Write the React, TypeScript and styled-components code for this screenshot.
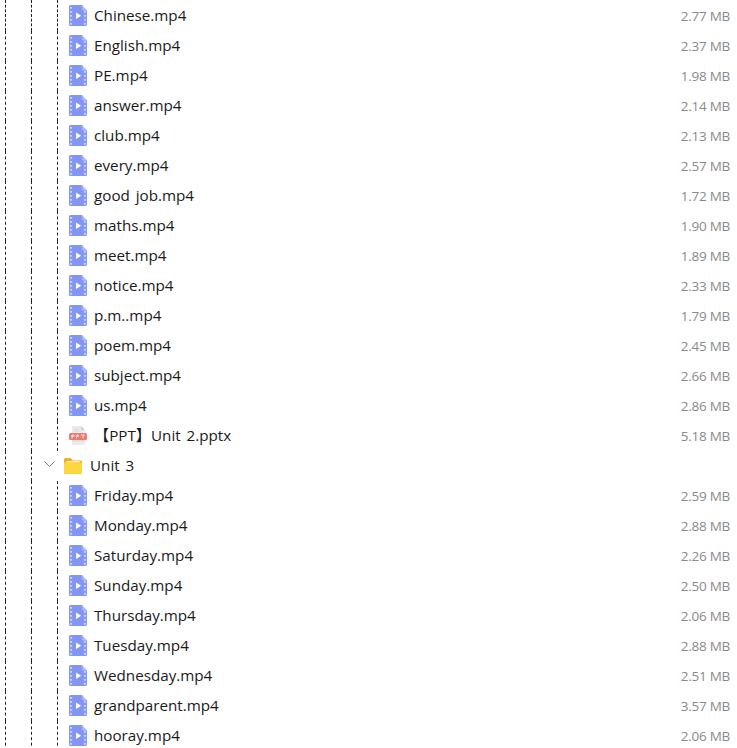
import React from 'react';
import styled, { createGlobalStyle } from 'styled-components';

type Item = { name: string; size?: string; kind: 'video' | 'ppt' | 'folder' };

const items: Item[] = [
  { name: 'Chinese.mp4', size: '2.77 MB', kind: 'video' },
  { name: 'English.mp4', size: '2.37 MB', kind: 'video' },
  { name: 'PE.mp4', size: '1.98 MB', kind: 'video' },
  { name: 'answer.mp4', size: '2.14 MB', kind: 'video' },
  { name: 'club.mp4', size: '2.13 MB', kind: 'video' },
  { name: 'every.mp4', size: '2.57 MB', kind: 'video' },
  { name: 'good job.mp4', size: '1.72 MB', kind: 'video' },
  { name: 'maths.mp4', size: '1.90 MB', kind: 'video' },
  { name: 'meet.mp4', size: '1.89 MB', kind: 'video' },
  { name: 'notice.mp4', size: '2.33 MB', kind: 'video' },
  { name: 'p.m..mp4', size: '1.79 MB', kind: 'video' },
  { name: 'poem.mp4', size: '2.45 MB', kind: 'video' },
  { name: 'subject.mp4', size: '2.66 MB', kind: 'video' },
  { name: 'us.mp4', size: '2.86 MB', kind: 'video' },
  { name: '【PPT】Unit 2.pptx', size: '5.18 MB', kind: 'ppt' },
  { name: 'Unit 3', kind: 'folder' },
  { name: 'Friday.mp4', size: '2.59 MB', kind: 'video' },
  { name: 'Monday.mp4', size: '2.88 MB', kind: 'video' },
  { name: 'Saturday.mp4', size: '2.26 MB', kind: 'video' },
  { name: 'Sunday.mp4', size: '2.50 MB', kind: 'video' },
  { name: 'Thursday.mp4', size: '2.06 MB', kind: 'video' },
  { name: 'Tuesday.mp4', size: '2.88 MB', kind: 'video' },
  { name: 'Wednesday.mp4', size: '2.51 MB', kind: 'video' },
  { name: 'grandparent.mp4', size: '3.57 MB', kind: 'video' },
  { name: 'hooray.mp4', size: '2.06 MB', kind: 'video' },
];

const VideoIcon = () => (
  <svg width="18" height="21" viewBox="0 0 18 21">
    <path d="M0 1.5A1.5 1.5 0 0 1 1.5 0H12.5L18 5.5v14a1.5 1.5 0 0 1-1.5 1.5h-15A1.5 1.5 0 0 1 0 19.5z" fill="#8598f3" />
    <path d="M12.5 0L18 5.5h-4A1.5 1.5 0 0 1 12.5 4z" fill="#aebcf8" />
    <rect x="4" y="0" width="10" height="21" fill="#7d90f0" opacity="0.35" />
    <path d="M7 7.5l5.2 3.2L7 13.9z" fill="#fff" />
    {[2, 6, 10, 14, 18].map((y) => (
      <React.Fragment key={y}>
        <rect x="1.2" y={y} width="1.7" height="1.7" fill="#d3dafb" />
        {y > 4 && <rect x="15.1" y={y} width="1.7" height="1.7" fill="#d3dafb" />}
      </React.Fragment>
    ))}
  </svg>
);

const PptIcon = () => (
  <svg width="18" height="19" viewBox="0 0 18 19">
    <path d="M3 0h9l4 4v15H3z" fill="#ececec" />
    <path d="M12 0l4 4h-4z" fill="#cfcfcf" />
    <path d="M5 3h5M5 5h7" stroke="#dadada" />
    <rect x="0" y="7" width="18" height="7" rx="1.5" fill="#ea7a72" />
    <path d="M3 9h2v1.5H3zM3 9v3.5M7.5 9h2v1.5h-2zM7.5 9v3.5M12 9h4M14 9v3.5" stroke="#fbe3e1" strokeWidth="0.9" fill="none" />
    <path d="M3 14h13v1.5H3z" fill="#dcdcdc" />
  </svg>
);

const FolderIcon = () => (
  <svg width="18" height="16" viewBox="0 0 18 16">
    <path d="M0 1.5A1.5 1.5 0 0 1 1.5 0h5L9 2.5h7.5A1.5 1.5 0 0 1 18 4v10.5a1.5 1.5 0 0 1-1.5 1.5h-15A1.5 1.5 0 0 1 0 14.5z" fill="#eeb21c" />
    <rect x="0" y="4.5" width="18" height="11.5" rx="1.2" fill="#fcd73f" />
    <rect x="2.5" y="3" width="13" height="1.4" fill="#fff2bd" />
  </svg>
);

const Chevron = () => (
  <svg width="11" height="6" viewBox="0 0 11 6">
    <path d="M0.5 0.5L5.5 5.5l5-5" fill="none" stroke="#777" strokeWidth="1" />
  </svg>
);

const App: React.FC = () => (
  <>
    <GlobalStyle />
    <Tree>
      {items.map((item) => (
        <Row key={item.name}>
          <Guide />
          <Guide />
          {item.kind === 'folder' ? (
            <FolderCell>
              <ChevronSlot>
                <Chevron />
              </ChevronSlot>
              <FolderSlot>
                <FolderIcon />
              </FolderSlot>
              <Name>{item.name}</Name>
            </FolderCell>
          ) : (
            <FileCell>
              <IconSlot>{item.kind === 'ppt' ? <PptIcon /> : <VideoIcon />}</IconSlot>
              <Name>{item.name}</Name>
              <Size>{item.size}</Size>
            </FileCell>
          )}
        </Row>
      ))}
    </Tree>
  </>
);

const GlobalStyle = createGlobalStyle`
  html, body {
    margin: 0;
    height: 100%;
    overflow: hidden;
    background: #fff;
  }
`;

const Tree = styled.div`
  display: flex;
  flex-direction: column;
  padding-left: 5px;
  font-family: 'Open Sans', 'Noto Sans CJK SC', sans-serif;
  font-size: 15.2px;
  word-spacing: 2px;
  color: #1a1a1a;
`;

const Row = styled.div`
  display: flex;
  height: 30px;
  flex-shrink: 0;

  &:first-child {
    height: 31px;
  }
`;

const Guide = styled.div`
  width: 26px;
  flex-shrink: 0;
  box-sizing: border-box;
  border-left: 1px dashed #222;
`;

const FileCell = styled.div`
  flex: 1;
  display: flex;
  align-items: flex-end;
  height: 100%;
  box-sizing: border-box;
  padding: 0 7px 0 0;
  border-left: 1px dashed #222;
`;

const FolderCell = styled.div`
  flex: 1;
  display: flex;
  align-items: flex-end;
  height: 100%;
  margin-left: -17px;
`;

const ChevronSlot = styled.span`
  width: 24px;
  height: 30px;
  display: flex;
  align-items: center;
  justify-content: center;
  margin: 0 3px 2px -3px;
`;

const FolderSlot = styled.span`
  width: 26px;
  height: 30px;
  padding-bottom: 1px;
  box-sizing: border-box;
  display: flex;
  align-items: center;
`;

const IconSlot = styled.span`
  width: 36px;
  height: 30px;
  padding: 0 0 2px 11px;
  box-sizing: border-box;
  display: flex;
  align-items: center;
  flex-shrink: 0;
`;

const Name = styled.span`
  flex: 1;
  height: 30px;
  line-height: 29px;
  white-space: nowrap;
`;

const Size = styled.span`
  height: 30px;
  line-height: 30px;
  font-size: 13.5px;
  letter-spacing: -0.25px;
  word-spacing: 0;
  color: #8a8a8a;
`;

export default App;
